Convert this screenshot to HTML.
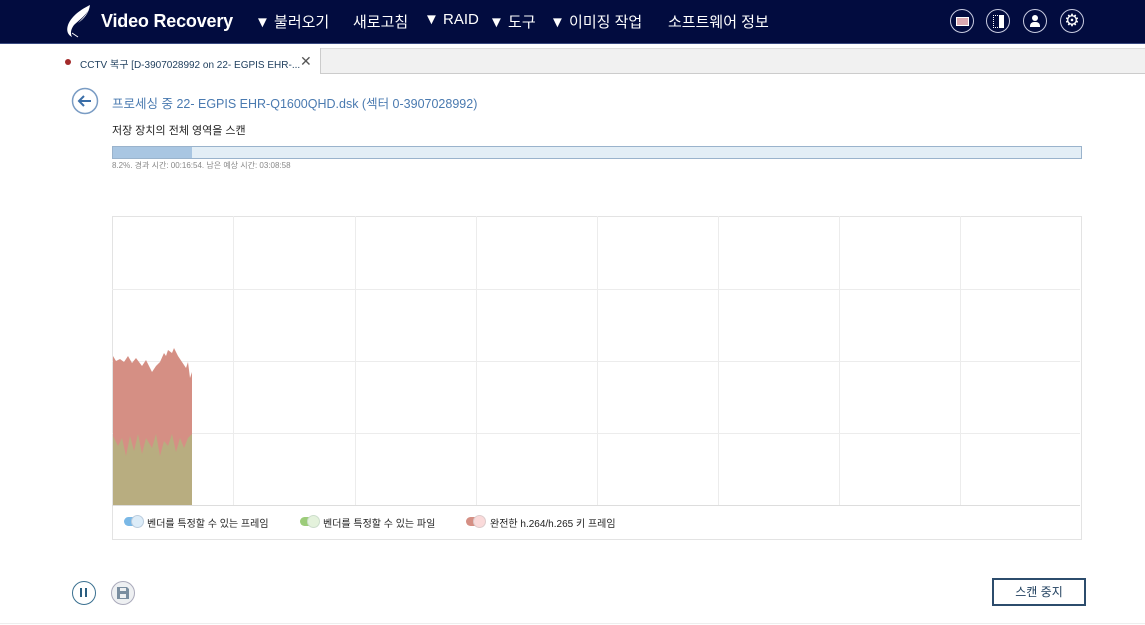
<!DOCTYPE html><html><head><meta charset="utf-8"><style>
body{margin:0;width:1145px;height:625px;overflow:hidden;background:#fff;font-family:"Liberation Sans","Noto Sans CJK KR",sans-serif;position:relative}
.hdr{position:absolute;left:0;top:0;width:1145px;height:43px;background:#020c3f;border-bottom:1px solid #3a4a80}
.hdr .t{position:absolute;top:11px;color:#fff;font-size:15px;white-space:nowrap}
.ic{position:absolute;top:9px;width:24px;height:24px;border:1.5px solid #c8cbe0;border-radius:50%;box-sizing:border-box}
.tabbar{position:absolute;left:0;top:48px;width:1145px;height:24px;background:#f1f1f1;border-top:1px solid #ddd;border-bottom:1px solid #ccc}
.tab{position:absolute;left:0;top:48px;width:320px;height:26px;background:#fff;border-right:1px solid #ccc}
.abs{position:absolute;white-space:nowrap}
</style></head><body>
<div class="hdr">
<svg class="abs" style="left:62px;top:3px" width="32" height="36" viewBox="0 0 32 36"><path d="M28 2C20 6 10 12 6 22C4 28 6 32 10 34C8 30 9 26 12 22C16 18 22 14 26 8C24 12 20 16 16 20C22 16 27 10 28 2Z" fill="#fff"/><path d="M10 30L16 34" stroke="#fff" stroke-width="1"/></svg>
<div class="t" style="left:101px;font-size:18px;top:11px;font-weight:600;letter-spacing:-0.2px">Video Recovery</div>
<div class="t" style="left:255px">▼ 불러오기</div>
<div class="t" style="left:353px">새로고침</div>
<div class="t" style="left:424px">▼ RAID</div>
<div class="t" style="left:489px">▼ 도구</div>
<div class="t" style="left:550px">▼ 이미징 작업</div>
<div class="t" style="left:668px">소프트웨어 정보</div>
<div class="ic" style="left:950px"><div style="position:absolute;left:5px;top:7px;width:11px;height:7px;background:#d9a8b0;border:1px solid #fff"></div></div>
<div class="ic" style="left:986px"><div style="position:absolute;left:6px;top:5px;width:5px;height:11px;border:1px dotted #fff"></div><div style="position:absolute;left:12px;top:5px;width:5px;height:13px;background:#fff"></div></div>
<div class="ic" style="left:1023px"><div style="position:absolute;left:8px;top:5px;width:6px;height:6px;background:#fff;border-radius:50%"></div><div style="position:absolute;left:6px;top:12px;width:10px;height:5px;background:#fff;border-radius:4px 4px 0 0"></div></div>
<div class="ic" style="left:1060px;color:#fff;font-size:17px;line-height:21px;text-align:center">⚙</div>
</div>
<div class="tabbar"></div>
<div class="tab"></div>
<div class="abs" style="left:65px;top:59px;width:6px;height:6px;border-radius:50%;background:#a32a2a"></div>
<div class="abs" style="left:80px;top:56px;font-size:10px;color:#1d3d5c">CCTV 복구 [D-3907028992 on 22- EGPIS EHR-...</div>
<div class="abs" style="left:300px;top:53px;font-size:14px;color:#555">✕</div>
<svg class="abs" style="left:71px;top:87px" width="28" height="28"><circle cx="14" cy="14" r="12.5" fill="none" stroke="#7a9cc4" stroke-width="1.5"/><path d="M20 14H8M13 9L8 14L13 19" fill="none" stroke="#3a6ea8" stroke-width="2"/></svg>
<div class="abs" style="left:112px;top:93px;font-size:12.5px;color:#4a7ab0">프로세싱 중 22- EGPIS EHR-Q1600QHD.dsk (섹터 0-3907028992)</div>
<div class="abs" style="left:112px;top:122px;font-size:11px;color:#222">저장 장치의 전체 영역을 스캔</div>
<div class="abs" style="left:112px;top:146px;width:968px;height:11px;border:1px solid #9ab3cc;background:#e3eef6"></div>
<div class="abs" style="left:113px;top:147px;width:79px;height:11px;background:#a9c6e2"></div>
<div class="abs" style="left:112px;top:160px;font-size:8px;color:#888">8.2%. 경과 시간: 00:16:54. 남은 예상 시간: 03:08:58</div>
<div class="abs" style="left:112px;top:216px;width:968px;height:322px;border:1px solid #e3e3e3"></div>
<svg class="abs" style="left:112px;top:216px" width="970" height="290">
<g stroke="#ececec" stroke-width="1"><line x1="121.5" y1="0" x2="121.5" y2="289"/><line x1="243.5" y1="0" x2="243.5" y2="289"/><line x1="364.5" y1="0" x2="364.5" y2="289"/><line x1="485.5" y1="0" x2="485.5" y2="289"/><line x1="606.5" y1="0" x2="606.5" y2="289"/><line x1="727.5" y1="0" x2="727.5" y2="289"/><line x1="848.5" y1="0" x2="848.5" y2="289"/><line x1="0" y1="73.5" x2="968" y2="73.5"/><line x1="0" y1="145.5" x2="968" y2="145.5"/><line x1="0" y1="217.5" x2="968" y2="217.5"/><line x1="0" y1="289.5" x2="968" y2="289.5" stroke="#ddd"/></g>
<path d="M1 289V140L4 145L8 143L12 146L16 140L20 147L24 142L30 150L34 144L40 156L44 150L48 146L52 137L54 140L56 134L60 137L62 132L66 140L70 146L74 152L76 146L78 162L80 156L80 289Z" fill="#d58f84"/>
<path d="M1 289V220L6 230L10 222L14 240L18 220L22 235L26 218L30 238L34 222L40 232L44 218L48 240L52 225L56 230L60 218L64 236L68 222L72 232L76 222L80 218L80 289Z" fill="#b8ad80"/>
</svg>
<div class="abs" style="left:124px;top:517px;width:16px;height:9px;border-radius:5px;background:#7ab8e6"></div><div class="abs" style="left:131px;top:515px;width:11px;height:11px;border-radius:50%;background:#dcecf8;border:1px solid #bcd"></div>
<div class="abs" style="left:147px;top:515px;font-size:10px;color:#222">벤더를 특정할 수 있는 프레임</div>
<div class="abs" style="left:300px;top:517px;width:16px;height:9px;border-radius:5px;background:#9ccc7a"></div><div class="abs" style="left:307px;top:515px;width:11px;height:11px;border-radius:50%;background:#e4f2dc;border:1px solid #cdc"></div>
<div class="abs" style="left:323px;top:515px;font-size:10px;color:#222">벤더를 특정할 수 있는 파일</div>
<div class="abs" style="left:466px;top:517px;width:16px;height:9px;border-radius:5px;background:#d58f84"></div><div class="abs" style="left:473px;top:515px;width:11px;height:11px;border-radius:50%;background:#fadada;border:1px solid #dcc"></div>
<div class="abs" style="left:490px;top:515px;font-size:10px;color:#222">완전한 h.264/h.265 키 프레임</div>
<div class="abs" style="left:72px;top:581px;width:24px;height:24px;border:1.5px solid #3a7090;border-radius:50%;box-sizing:border-box"><div style="position:absolute;left:7px;top:6px;width:2px;height:9px;background:#2a5e80"></div><div style="position:absolute;left:12px;top:6px;width:2px;height:9px;background:#2a5e80"></div></div>
<div class="abs" style="left:111px;top:581px;width:24px;height:24px;border:1.5px solid #aab;border-radius:50%;box-sizing:border-box;background:#eef0f2"><svg style="position:absolute;left:5px;top:5px" width="12" height="12"><path d="M0 0H10L12 2V12H0Z" fill="#7a8ea0"/><rect x="3" y="1" width="6" height="3" fill="#eef0f2"/><rect x="3" y="7" width="6" height="4" fill="#eef0f2"/></svg></div>
<div class="abs" style="left:992px;top:578px;width:94px;height:28px;border:2px solid #2c4c6c;box-sizing:border-box;text-align:center;line-height:24px;font-size:12px;color:#1d3d5c">스캔 중지</div>
<div class="abs" style="left:0;top:623px;width:1145px;height:1px;background:#eee"></div>
</body></html>
